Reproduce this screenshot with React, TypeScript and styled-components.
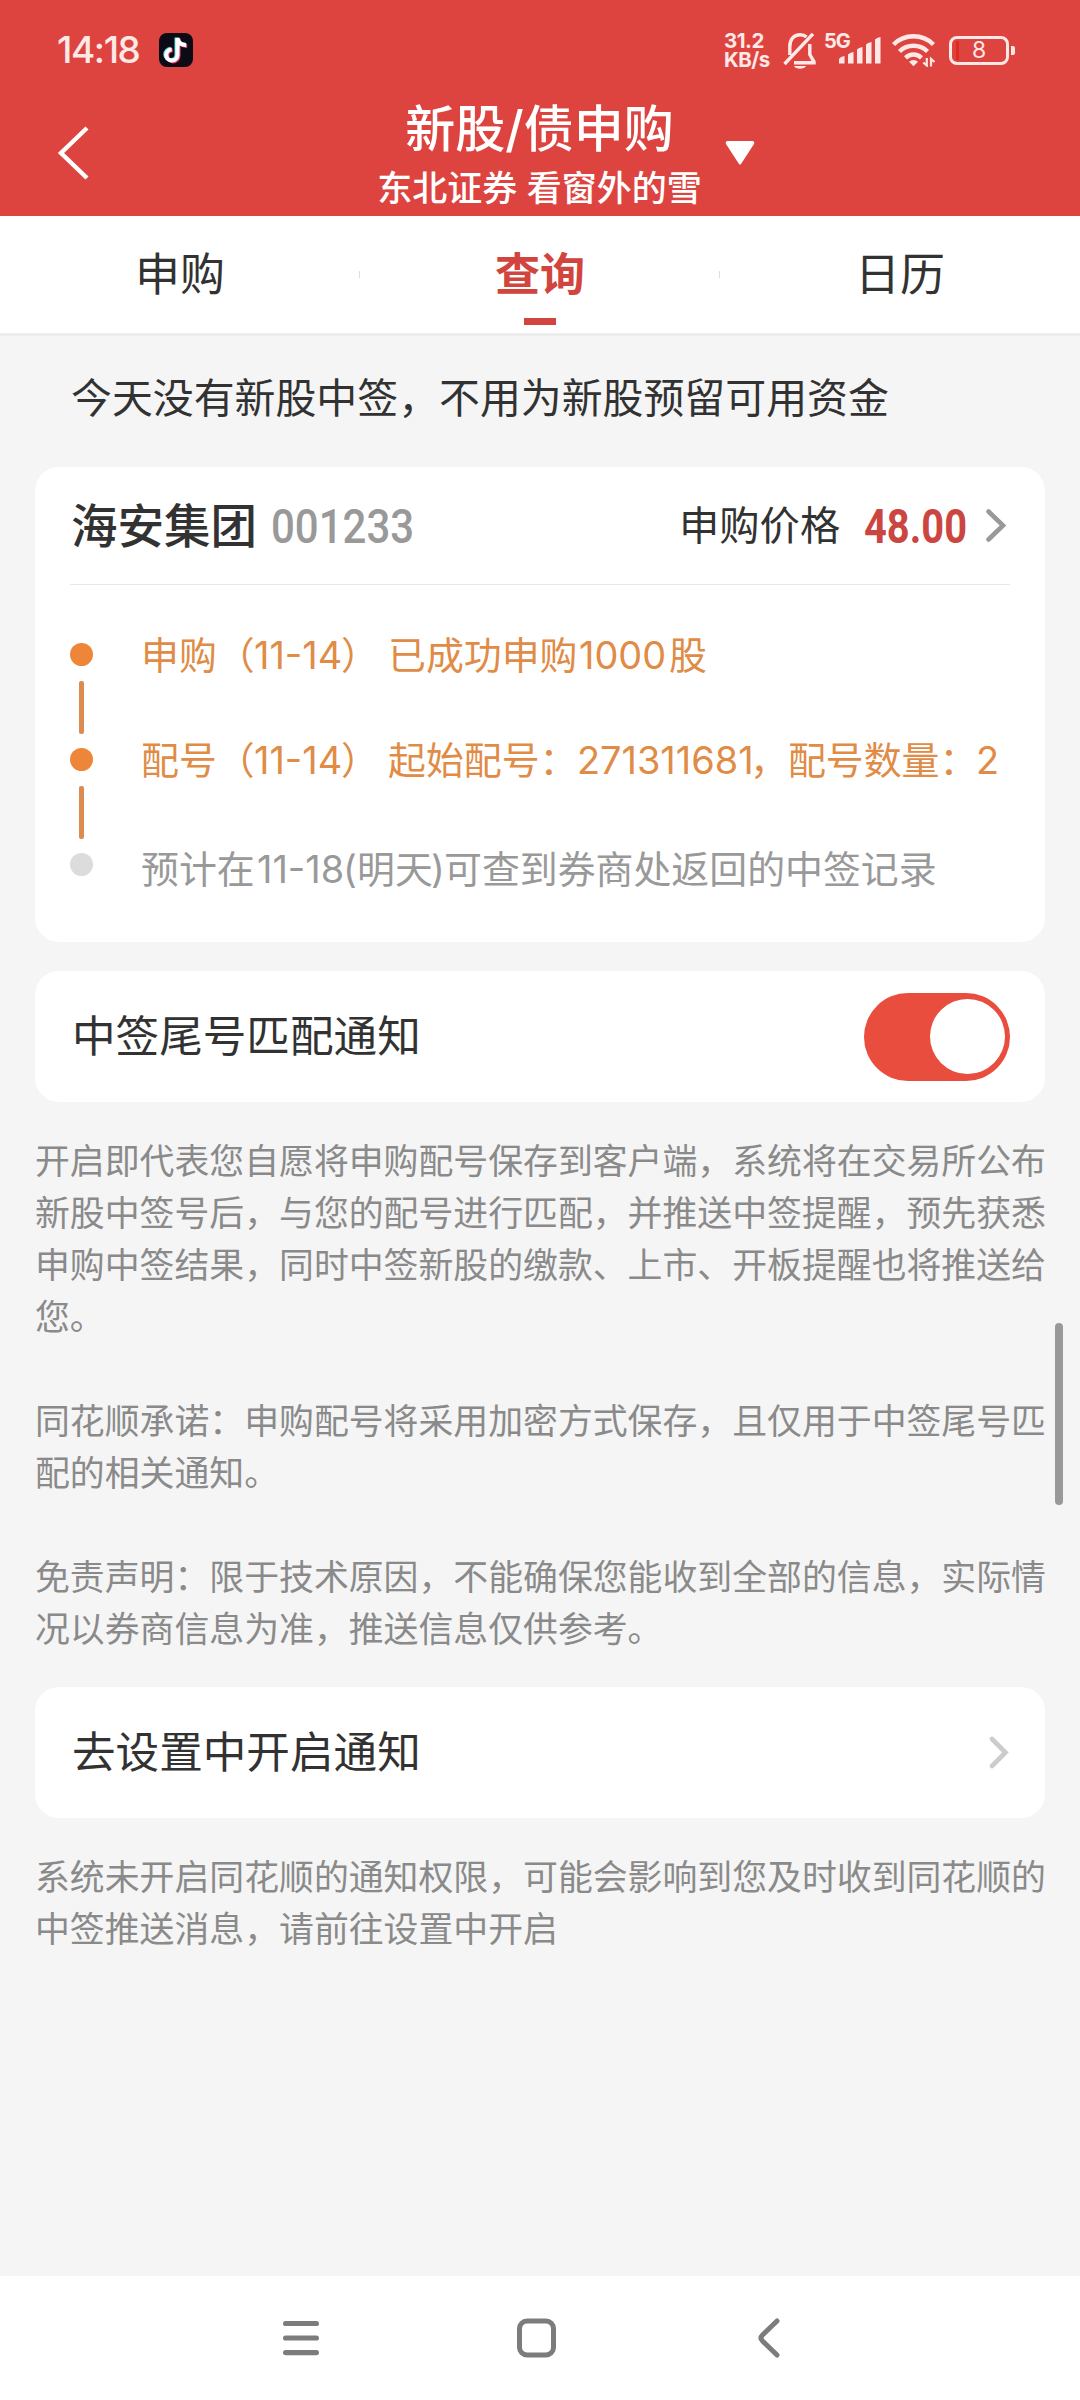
import React from "react";
import styled, { createGlobalStyle } from "styled-components";

const Global = createGlobalStyle`
  * { box-sizing: border-box; }
  body { margin: 0; background: #f5f5f5; }
  button { border: 0; padding: 0; background: none; font: inherit; color: inherit; }
  svg { display: block; flex: none; }
`;

const Screen = styled.div`
  width: 1080px;
  height: 2400px;
  display: flex;
  flex-direction: column;
  background: #f5f5f5;
  color: #323232;
  overflow: hidden;
  font-family: Inter, "Noto Sans CJK SC", sans-serif;
  white-space: nowrap;
`;

const Header = styled.header`
  height: 216px;
  background: #dd4440;
  color: #fff;
`;

const StatusBar = styled.div`
  height: 100px;
  padding: 0 65px 0 57px;
  display: flex;
  align-items: center;
  justify-content: space-between;
  color: #ffe9e7;
`;

const StatusGroup = styled.div`
  display: flex;
  align-items: center;
`;

const Clock = styled.span`
  width: 102px;
  font-size: 37px;
  line-height: 44px;
  font-weight: 500;
  letter-spacing: -1.4px;
`;

const NetSpeed = styled.div`
  width: 59px;
  font-size: 20.5px;
  line-height: 19px;
  font-weight: 700;
  letter-spacing: -0.5px;
`;

const Network = styled.div`
  display: flex;
  align-items: center;
  margin: 0 8px 0 7px;
`;

const Generation = styled.span`
  width: 14px;
  height: 34px;
  font-size: 20px;
  line-height: 16px;
  font-weight: 700;
  letter-spacing: -1px;
`;

const Battery = styled.div`
  display: flex;
  align-items: center;
  margin-left: 14px;
  &::after {
    content: "";
    width: 4px;
    height: 9px;
    margin-left: 2px;
    border-radius: 0 2px 2px 0;
    background: currentColor;
  }
`;

const BatteryShell = styled.span`
  width: 60px;
  height: 29px;
  border: 3px solid currentColor;
  border-radius: 8px;
  font-size: 23px;
  line-height: 23px;
  text-align: center;
  background: linear-gradient(#e02a20, #e02a20) 4px 2px / 3px 19px no-repeat;
`;

const TitleBar = styled.div`
  height: 116px;
  display: grid;
  grid-template-columns: 379px 321px 1fr;
`;

const BackButton = styled.button`
  display: flex;
  align-items: flex-start;
  padding: 25px 0 0 57px;
`;

const Titles = styled.div`
  display: flex;
  flex-direction: column;
  align-items: center;
`;

const Title = styled.h1`
  margin: 0;
  height: 59px;
  font-size: 50px;
  line-height: 59px;
  font-weight: 500;
`;

const Subtitle = styled.div`
  font-size: 35px;
  line-height: 59px;
  font-weight: 500;
`;

const Caret = styled.div`
  padding: 41px 0 0 25px;
`;

const Tabs = styled.nav`
  height: 120px;
  flex: none;
  display: grid;
  grid-template-columns: repeat(3, 1fr);
  background: #fff;
  border-bottom: 3px solid #ededed;
`;

const Tab = styled.div<{ $active?: boolean }>`
  display: flex;
  flex-direction: column;
  align-items: center;
  padding-top: 30px;
  font-size: 45px;
  line-height: 58px;
  font-weight: ${(p) => (p.$active ? 600 : 400)};
  color: ${(p) => (p.$active ? "#d1453e" : "#323232")};
  background: linear-gradient(#ddd, #ddd) right 55px / 1px 7px no-repeat;
  &:last-child { background: none; }
  &::after {
    content: "";
    width: 32px;
    height: 7px;
    margin-top: 14px;
    background: ${(p) => (p.$active ? "#d1453e" : "transparent")};
  }
`;

const Main = styled.main`
  height: 1940px;
  padding: 0 35px;
  position: relative;
`;

const Notice = styled.p`
  margin: 0;
  height: 131px;
  padding-left: 36px;
  font-size: 40.9px;
  line-height: 125px;
`;

const Card = styled.section`
  width: 1010px;
  border-radius: 24px;
  background: #fff;
`;

const StockCard = styled(Card)`
  height: 475px;
  margin-bottom: 29px;
  padding: 0 35px;
`;

const StockHead = styled.div`
  height: 118px;
  display: flex;
  align-items: center;
  border-bottom: 1px solid #e8e8e8;
`;

const StockName = styled.h2`
  margin: 0;
  width: 201px;
  padding-left: 1px;
  font-size: 46.5px;
  font-weight: 500;
  line-height: 60px;
`;

const Figures = styled.span<{ $w: number; $color: string; $weight: number; $scale: number }>`
  width: ${(p) => p.$w}px;
  font-family: Roboto, sans-serif;
  font-size: 48px;
  line-height: 60px;
  font-weight: ${(p) => p.$weight};
  color: ${(p) => p.$color};
  transform: scaleX(${(p) => p.$scale});
  transform-origin: left center;
  padding-top: 3px;
`;

const PriceLabel = styled.span`
  margin-left: auto;
  width: 185px;
  font-size: 40.3px;
  line-height: 60px;
`;

const Steps = styled.ol`
  margin: 0;
  padding: 58px 0 0;
  list-style: none;
`;

const Step = styled.li<{ $pending?: boolean }>`
  height: 105px;
  display: grid;
  grid-template-columns: 71px 1fr;
  font-size: 37.9px;
  line-height: 50px;
  color: ${(p) => (p.$pending ? "#999" : "#e08b46")};
`;

const StepText = styled.div<{ $drop?: number }>`
  display: flex;
  height: 50px;
  margin-top: ${(p) => -13 + (p.$drop ?? 0)}px;
`;

const Piece = styled.span<{ $w?: number }>`
  width: ${(p) => (p.$w ? p.$w + "px" : "auto")};
  flex: none;
`;

const Rail = styled.div<{ $pending?: boolean }>`
  width: 23px;
  display: flex;
  flex-direction: column;
  align-items: center;
  &::before {
    content: "";
    width: 23px;
    height: 23px;
    border-radius: 50%;
    background: ${(p) => (p.$pending ? "#dcdcdc" : "#ee8639")};
  }
`;

const RailLine = styled.i`
  width: 5px;
  height: 53px;
  margin-top: 15px;
  margin-right: 1px;
  border-radius: 2px;
  background: #dc8c4e;
`;

const SettingCard = styled(Card)`
  height: 131px;
  padding: 0 35px 0 37px;
  display: flex;
  align-items: center;
  justify-content: space-between;
  font-size: 43.6px;
  line-height: 60px;
`;

const Switch = styled.button`
  width: 146px;
  height: 88px;
  padding: 0 5px;
  border-radius: 44px;
  background: #e84d3e;
  display: flex;
  align-items: center;
  justify-content: flex-end;
  &::after {
    content: "";
    width: 75px;
    height: 75px;
    border-radius: 50%;
    background: #fff;
  }
`;

const Prose = styled.div<{ $h: number }>`
  height: ${(p) => p.$h}px;
  padding-top: 33px;
  font-size: 34.86px;
  line-height: 52px;
  color: #8a8a8a;
`;

const Paragraph = styled.p`
  margin: 0 0 52px;
`;

const Line = styled.span`
  display: block;
`;

const ScrollThumb = styled.div`
  position: absolute;
  left: 1055px;
  top: 987px;
  width: 8px;
  height: 182px;
  border-radius: 4px;
  background: #999;
`;

const NavBar = styled.footer`
  flex: 1;
  display: grid;
  grid-template-columns: 36px 40px 26px;
  column-gap: 198px;
  padding-left: 283px;
  align-items: center;
  background: #fff;
`;

const NOTE = "M18.5 5v17a5.6 5.6 0 1 1-5.8-5.6M18.5 5c.6 4.5 4 7 8.7 7.2";

const DouyinIcon = () => (
  <svg width="34" height="34" viewBox="0 0 34 34">
    <rect width="34" height="34" rx="8" fill="#0c0a14" />
    <g fill="none" strokeWidth="4">
      <path transform="translate(-1 -.6)" stroke="#5fe3dc" d={NOTE} />
      <path transform="translate(1 .8)" stroke="#ee3b66" d={NOTE} />
      <path stroke="#fff" d={NOTE} />
    </g>
  </svg>
);

const MuteIcon = () => (
  <svg width="34" height="37" viewBox="0 0 34 37" fill="none" stroke="currentColor" strokeWidth="3.4">
    <path d="M6.800 23V14.500C6.800 7 11 2.700 17 2.700c3 0 5 .8 6.500 2.200" />
    <path d="M26.800 12v10.500l4.200 7.300v1H11" />
    <path d="M1.500 32 30 1.800" />
    <path d="M11 34h12c-1.500 3.600-10.500 3.600-12 0z" fill="currentColor" stroke="none" />
  </svg>
);

const SignalIcon = () => (
  <svg width="46" height="34" viewBox="0 0 46 34" fill="currentColor">
    <path d="M1 26q1.500-2.500 5.500-3v7.500H1zM10 21.500q1.500-2 5.500-2.500v11.500H10zM19 16.500q1.500-2 5.500-2.500v16.500H19zM28 11.500q1.500-2 5.500-2.500v21.500H28zM37 6.500Q38.500 4.500 42.500 4v26.500H37z" />
  </svg>
);

const WifiIcon = () => (
  <svg width="43" height="34" viewBox="0 0 43 34" fill="none" stroke="currentColor" strokeWidth="4.4">
    <path d="M1.500 11.500a28.500 28.500 0 0 1 40 0M7.500 18.500a20 20 0 0 1 28 0M13.500 24.800a11.500 11.500 0 0 1 16 0" />
    <path d="M17 28.800a6.500 6.500 0 0 1 9 0l-4.500 4.400z" fill="currentColor" stroke="none" />
    <path d="M34.800 25v7.500l-3.500-3M39 33.500V26l3.500 3" strokeWidth="2.200" />
  </svg>
);

const Chevron = ({ color }: { color: string }) => (
  <svg width="24" height="38" viewBox="0 0 24 38" fill="none" stroke={color} strokeWidth="4.6" strokeLinecap="round">
    <path d="M2.500 4.500 17 18.500 2.500 32.500" />
  </svg>
);

const SmallChevron = () => (
  <svg width="21" height="36" viewBox="0 0 21 36" fill="none" stroke="#ccc" strokeWidth="4.6" strokeLinecap="round">
    <path d="M3 4 16.500 17.500 3 31" />
  </svg>
);

const terms = [
  [
    "开启即代表您自愿将申购配号保存到客户端，系统将在交易所公布",
    "新股中签号后，与您的配号进行匹配，并推送中签提醒，预先获悉",
    "申购中签结果，同时中签新股的缴款、上市、开板提醒也将推送给",
    "您。",
  ],
  ["同花顺承诺：申购配号将采用加密方式保存，且仅用于中签尾号匹", "配的相关通知。"],
  ["免责声明：限于技术原因，不能确保您能收到全部的信息，实际情", "况以券商信息为准，推送信息仅供参考。"],
];

const permission = [["系统未开启同花顺的通知权限，可能会影响到您及时收到同花顺的", "中签推送消息，请前往设置中开启"]];

const Copy = ({ paragraphs, height }: { paragraphs: string[][]; height: number }) => (
  <Prose $h={height}>
    {paragraphs.map((lines, i) => (
      <Paragraph key={i}>
        {lines.map((l) => (
          <Line key={l}>{l}</Line>
        ))}
      </Paragraph>
    ))}
  </Prose>
);

export default function App() {
  return (
    <>
      <Global />
      <Screen>
        <Header>
          <StatusBar>
            <StatusGroup>
              <Clock>14:18</Clock>
              <DouyinIcon />
            </StatusGroup>
            <StatusGroup>
              <NetSpeed>
                31.2
                <br />
                KB/s
              </NetSpeed>
              <MuteIcon />
              <Network>
                <Generation>5G</Generation>
                <SignalIcon />
              </Network>
              <WifiIcon />
              <Battery>
                <BatteryShell>8</BatteryShell>
              </Battery>
            </StatusGroup>
          </StatusBar>
          <TitleBar>
            <BackButton aria-label="返回">
              <svg width="34" height="56" viewBox="0 0 34 56" fill="none" stroke="#fff" strokeWidth="4.4">
                <path d="M30 3 4 28l26 25" />
              </svg>
            </BackButton>
            <Titles>
              <Title>新股/债申购</Title>
              <Subtitle>东北证券 看窗外的雪</Subtitle>
            </Titles>
            <Caret>
              <svg width="30" height="24" viewBox="0 0 30 24" fill="#fff">
                <path d="M2 0h26q2 1 1 3L16 23q-1 1-2 0L1 3Q0 1 2 0z" />
              </svg>
            </Caret>
          </TitleBar>
        </Header>
        <Tabs>
          <Tab>申购</Tab>
          <Tab $active>查询</Tab>
          <Tab>日历</Tab>
        </Tabs>
        <Main>
          <Notice>今天没有新股中签，不用为新股预留可用资金</Notice>
          <StockCard>
            <StockHead>
              <StockName>海安集团</StockName>
              <Figures $w={150} $color="#999" $weight={500} $scale={0.875}>001233</Figures>
              <PriceLabel>申购价格</PriceLabel>
              <Figures $w={122} $color="#cb4640" $weight={700} $scale={0.83}>48.00</Figures>
              <Chevron color="#999" />
            </StockHead>
            <Steps>
              <Step>
                <Rail><RailLine /></Rail>
                <StepText>
                  <Piece $w={113}>申购（</Piece>
                  <Piece $w={87}>11-14</Piece>
                  <Piece $w={47}>）</Piece>
                  <Piece $w={191}>已成功申购</Piece>
                  <Piece $w={90}>1000</Piece>
                  <Piece>股</Piece>
                </StepText>
              </Step>
              <Step>
                <Rail><RailLine /></Rail>
                <StepText>
                  <Piece $w={113}>配号（</Piece>
                  <Piece $w={87}>11-14</Piece>
                  <Piece $w={47}>）</Piece>
                  <Piece $w={189}>起始配号：</Piece>
                  <Piece $w={173}>271311681</Piece>
                  <Piece $w={226}>，配号数量：</Piece>
                  <Piece>2</Piece>
                </StepText>
              </Step>
              <Step $pending>
                <Rail $pending />
                <StepText $drop={4}>
                  <Piece $w={116}>预计在</Piece>
                  <Piece $w={86}>11-18</Piece>
                  <Piece $w={14}>(</Piece>
                  <Piece $w={74}>明天</Piece>
                  <Piece $w={13}>)</Piece>
                  <Piece>可查到券商处返回的中签记录</Piece>
                </StepText>
              </Step>
            </Steps>
          </StockCard>
          <SettingCard>
            中签尾号匹配通知
            <Switch aria-label="中签尾号匹配通知" />
          </SettingCard>
          <Copy paragraphs={terms} height={585} />
          <SettingCard>
            去设置中开启通知
            <SmallChevron />
          </SettingCard>
          <Copy paragraphs={permission} height={200} />
          <ScrollThumb />
        </Main>
        <NavBar>
          <svg width="36" height="40" viewBox="0 0 36 40" stroke="#7c7c7c" strokeWidth="5.2" strokeLinecap="round">
            <path d="M2.600 5.500h30.800M2.600 20h30.800M2.600 34.600h30.800" />
          </svg>
          <svg width="40" height="40" viewBox="0 0 40 40" fill="none" stroke="#7c7c7c" strokeWidth="5">
            <rect x="2.500" y="3" width="34" height="34" rx="7.500" />
          </svg>
          <svg width="26" height="40" viewBox="0 0 26 40" fill="none" stroke="#7c7c7c" strokeWidth="5" strokeLinecap="round">
            <path d="M22 3 7.500 17q-3 3 0 6L22 37" />
          </svg>
        </NavBar>
      </Screen>
    </>
  );
}
